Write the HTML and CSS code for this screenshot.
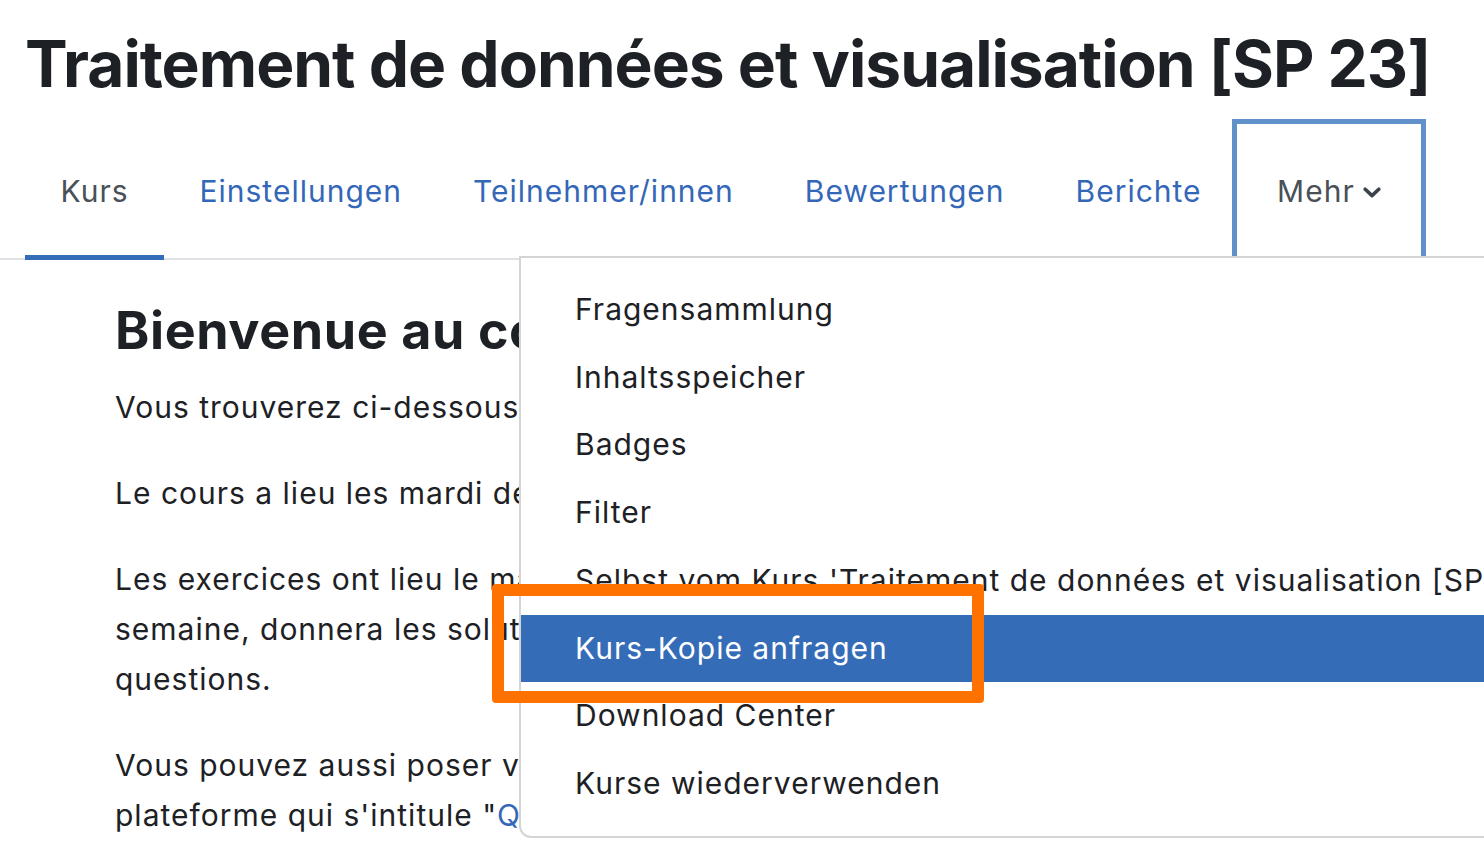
FILE: index.html
```html
<!DOCTYPE html>
<html lang="de">
<head>
<meta charset="utf-8">
<title>Traitement de données et visualisation [SP 23]</title>
<link rel="stylesheet" href="styles.css">
</head>
<body>
<div class="page">
  <header class="page-header">
    <h1 class="title">Traitement de données et visualisation [SP 23]</h1>
  </header>
  <nav class="tabs">
    <a class="tab active" href="#">Kurs</a>
    <a class="tab link" href="#">Einstellungen</a>
    <a class="tab link" href="#">Teilnehmer/innen</a>
    <a class="tab link" href="#">Bewertungen</a>
    <a class="tab link" href="#">Berichte</a>
    <a class="tab more" href="#">Mehr
      <svg class="chev" viewBox="0 0 18 11" width="18" height="11" aria-hidden="true"><path d="M2.2 2.2 L9 8.6 L15.8 2.2" fill="none" stroke="#3d434a" stroke-width="3.6" stroke-linecap="round" stroke-linejoin="round"/></svg>
    </a>
  </nav>
  <main class="content">
    <h3 class="welcome">Bienvenue au cours de traitement de données</h3>
    <p>Vous trouverez ci-dessous toutes les informations concernant le cours.</p>
    <p>Le cours a lieu les mardi de 10h15 à 12h00 en salle de cours.</p>
    <p>Les exercices ont lieu le mardi de 13h15 à 15h00. L'assistant, chaque<br>semaine, donnera les solutions des exercices et répondra à vos<br>questions.</p>
    <p>Vous pouvez aussi poser vos questions en tout temps sur le forum de la<br>plateforme qui s'intitule "<a class="inline-link" href="#">Questions</a>".</p>
  </main>

  <div class="dropdown">
    <a class="item" href="#">Fragensammlung</a>
    <a class="item" href="#">Inhaltsspeicher</a>
    <a class="item" href="#">Badges</a>
    <a class="item" href="#">Filter</a>
    <a class="item" href="#">Selbst vom Kurs 'Traitement de données et visualisation [SP 23]' abmelden</a>
    <a class="item selected" href="#">Kurs-Kopie anfragen</a>
    <a class="item" href="#">Download Center</a>
    <a class="item" href="#">Kurse wiederverwenden</a>
  </div>
  <div class="annotation"></div>
</div>
</body>
</html>
```
FILE: styles.css
```css
html, body {
  margin: 0;
  padding: 0;
  background: #ffffff;
  overflow: hidden;
}
body {
  width: 1484px;
  height: 856px;
  font-family: Inter, "Noto Sans", "Liberation Sans", sans-serif;
  color: #1d2125;
}
.page {
  position: relative;
  width: 1484px;
  height: 856px;
  overflow: hidden;
}
.page-header {
  padding: 24px 0 0 25px;
}
.title {
  margin: 0;
  font-size: 64px;
  font-weight: 700;
  line-height: 80px;
  letter-spacing: -1px;
  color: #1d2125;
  white-space: nowrap;
}
.tabs {
  display: flex;
  margin-top: 20px;
  padding-left: 25px;
  border-bottom: 2px solid #dee2e6;
  height: 134px;
}
.tab {
  display: flex;
  align-items: center;
  padding: 0 35.5px;
  font-size: 30px;
  letter-spacing: 1px;
  text-decoration: none;
  position: relative;
  white-space: nowrap;
}
.tab.active {
  color: #495057;
}
.tab.active::after {
  content: "";
  position: absolute;
  left: 0;
  right: 0;
  bottom: -2px;
  height: 5px;
  background: #356cb8;
}
.tab.link {
  color: #3467b7;
}
.tab.more {
  color: #495057;
  outline: 5px solid #6091c9;
  outline-offset: 0;
  padding: 0 40px 0 40px;
  gap: 8px;
}
.chev {
  display: block;
  margin-top: 2px;
}
.content {
  padding: 36px 0 0 115px;
}
.welcome {
  margin: 0 0 16px;
  font-size: 52px;
  font-weight: 700;
  line-height: 70px;
  letter-spacing: 0.6px;
  color: #1d2125;
  white-space: nowrap;
}
.content p {
  margin: 0 0 36px;
  font-size: 30px;
  line-height: 50px;
  letter-spacing: 1px;
  white-space: nowrap;
}
.inline-link {
  color: #3467b7;
  text-decoration: none;
}
.dropdown {
  position: absolute;
  left: 519px;
  top: 256px;
  width: 1100px;
  padding: 18px 0;
  background: #ffffff;
  border: 2px solid #d4d4d4;
  border-radius: 0 0 0 12px;
  display: flex;
  flex-direction: column;
}
.item {
  display: block;
  padding: 11px 0 11px 54px;
  font-size: 30px;
  line-height: 45.7px;
  letter-spacing: 1px;
  color: #1d2125;
  text-decoration: none;
  white-space: nowrap;
}
.item.selected {
  background: #356cb8;
  color: #ffffff;
}
.annotation {
  position: absolute;
  left: 492px;
  top: 584px;
  width: 468px;
  height: 95px;
  border: 12px solid #ff7200;
  border-radius: 4px;
}
```
